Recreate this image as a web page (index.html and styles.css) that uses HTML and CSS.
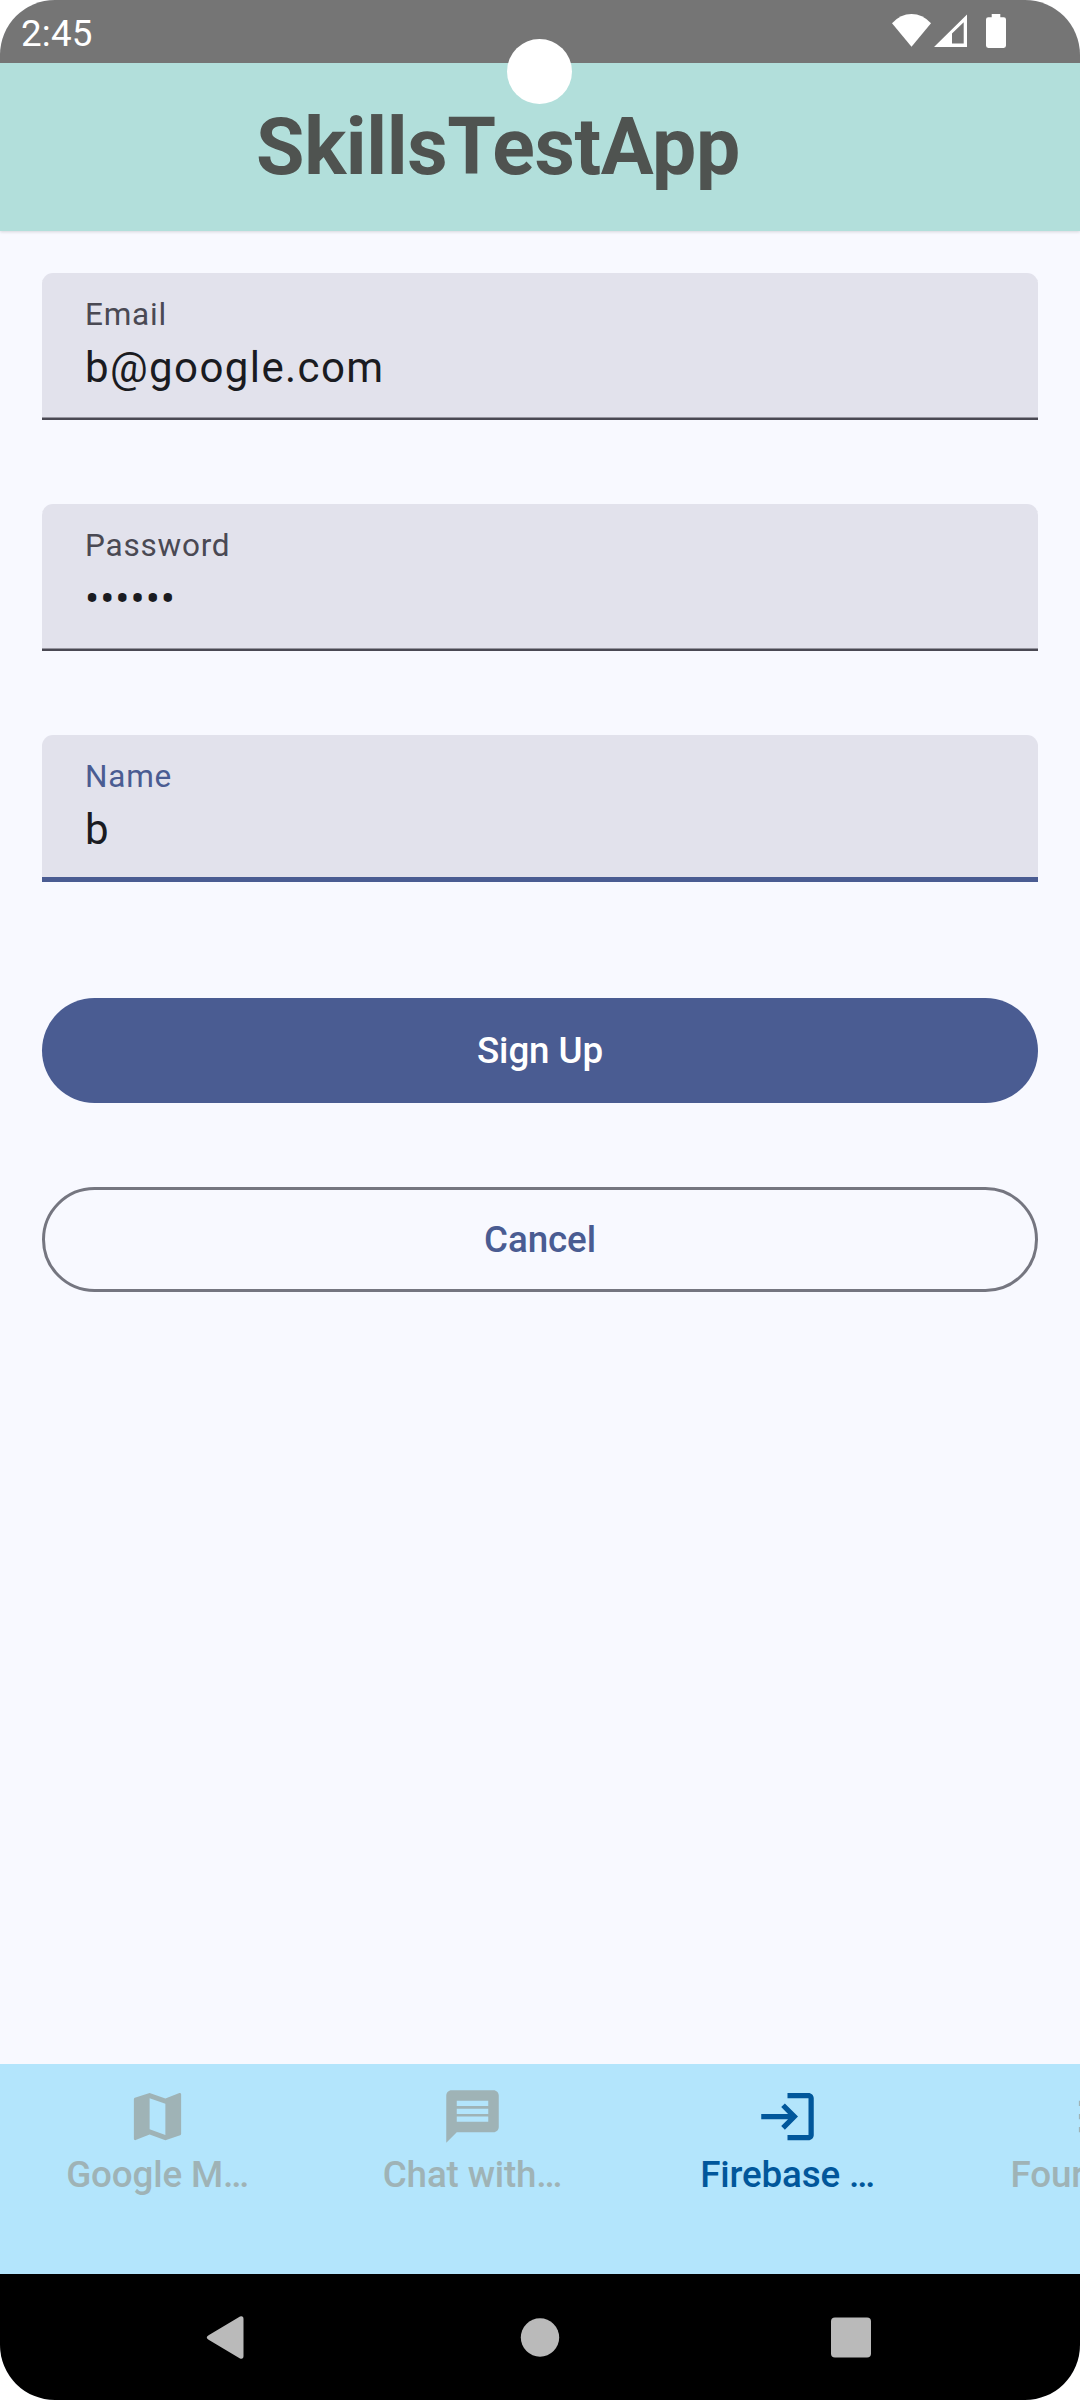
FILE: index.html
```html
<!DOCTYPE html>
<html lang="en">
<head>
<meta charset="utf-8">
<title>SkillsTestApp</title>
<link rel="stylesheet" href="styles.css">
</head>
<body>
<div class="screen">
  <div class="status-bar">
    <span class="clock">2:45</span>
    <svg class="status-icons" width="120" height="63" viewBox="0 0 120 63" aria-hidden="true">
      <path d="M0 23.2Q8.500 14 19.500 14T39 23.200L19.500 46.800Z"/>
      <path fill-rule="evenodd" d="M42 47L75 14.500V47ZM60 33.500V43.500H71.700V22.200Z"/>
      <path d="M99.700 14h8.600v3.300h3.400q2.300 0 2.300 2.300v26q0 2.300-2.300 2.300h-15.400q-2.300 0-2.300-2.300v-26q0-2.300 2.300-2.300h3.400z"/>
    </svg>
    <span class="camera"></span>
  </div>
  <header class="app-bar"><h1>SkillsTestApp</h1></header>
  <main class="form">
    <div class="field"><span class="label">Email</span><span class="value">b@google.com</span></div>
    <div class="field"><span class="label">Password</span><span class="value dots">••••••</span></div>
    <div class="field focused"><span class="label">Name</span><span class="value">b</span></div>
    <button class="btn primary">Sign Up</button>
    <button class="btn outlined">Cancel</button>
  </main>
  <nav class="tabs">
    <a class="tab">
      <svg viewBox="0 0 24 24"><path d="M20.500 3l-.16.030L15 5.100 9 3 3.360 4.900c-.21.070-.36.250-.36.480V20.500c0 .28.220.5.500.5l.16-.030L9 18.900l6 2.100 5.640-1.900c.21-.070.360-.250.360-.480V3.500c0-.280-.220-.5-.5-.5zM15 19l-6-2.110V5l6 2.110V19z"/></svg>
      <span>Google M…</span>
    </a>
    <a class="tab">
      <svg viewBox="0 0 24 24"><path d="M20 2H4c-1.100 0-1.990.9-1.990 2L2 22l4-4h14c1.100 0 2-.9 2-2V4c0-1.100-.9-2-2-2zm-2 12H6v-2h12v2zm0-3H6V9h12v2zm0-3H6V6h12v2z"/></svg>
      <span>Chat with…</span>
    </a>
    <a class="tab active">
      <svg viewBox="0 0 24 24"><path d="M12 3h8c1.100 0 2 .9 2 2v14c0 1.100-.9 2-2 2h-8v-2h8V5h-8zM11 7L9.600 8.400l2.600 2.600H2v2h10.200l-2.600 2.600L11 17l5-5z"/></svg>
      <span>Firebase …</span>
    </a>
    <a class="tab">
      <svg viewBox="0 0 24 24"><path d="M3 6h2v2H3zM3 11h2v2H3zM3 16h2v2H3zM7 6h14v2H7zM7 11h14v2H7zM7 16h14v2H7z"/></svg>
      <span>Foursqua…</span>
    </a>
  </nav>
  <div class="system-nav">
    <svg viewBox="0 0 63 63"><path d="M16 29L47 10.500Q50.500 9.500 50.500 13V50Q50.500 53.500 47 52.500L16 34Q11.500 31.500 16 29Z"/></svg>
    <svg viewBox="0 0 63 63"><circle cx="32" cy="31.500" r="19.200"/></svg>
    <svg viewBox="0 0 63 63"><rect x="8" y="11.500" width="40" height="40" rx="4"/></svg>
  </div>
</div>
</body>
</html>
```
FILE: styles.css
```css
* { box-sizing: border-box; }
body { margin: 0; background: #fff; font-family: Roboto, sans-serif; }
.screen {
  width: 1080px; height: 2400px; display: flex; flex-direction: column;
  background: #f8f9ff; border-radius: 55px; overflow: hidden;
}
.status-bar {
  position: relative; flex: none; height: 63px; display: flex; justify-content: space-between;
  padding: 0 68px 0 21px; background: #757575; color: #fff;
}
.clock { padding-top: 2px; font-size: 36.75px; line-height: 63px; letter-spacing: .2px; }
.status-icons { fill: #fff; }
.camera {
  position: absolute; left: 507px; top: 39px; width: 65px; height: 65px;
  border-radius: 50%; background: #fff;
}
.app-bar {
  flex: none; height: 168px; padding-left: 256px; background: #b2dfdb;
  box-shadow: 0 1px 3px rgba(0, 0, 0, .14);
}
.app-bar h1 {
  margin: 0; font-size: 78.75px; font-weight: 700; line-height: 168px;
  letter-spacing: -.36px; color: #4f5350;
}
.form { flex: 1; display: flex; flex-direction: column; padding: 42px 42px 0; }
.field {
  flex: none; height: 147px; margin-bottom: 84px; padding: 21px 43px 0;
  display: flex; flex-direction: column;
  background: #e2e2ec; border-radius: 11px 11px 0 0; box-shadow: inset 0 -2.600px #4a4953;
}
.label { font-size: 31.500px; line-height: 42px; letter-spacing: .78px; color: #4a4953; }
.value { font-size: 42px; line-height: 63px; letter-spacing: 1.400px; color: #1a1b21; }
.dots { letter-spacing: 1px; }
.focused { margin-bottom: 116px; box-shadow: inset 0 -5px #4a5c92; }
.focused .label { color: #4a5c92; }
.btn {
  flex: none; height: 105px; margin: 0 0 84px; padding: 0; border: 0; border-radius: 53px;
  font: 500 36.75px/105px Roboto, sans-serif; letter-spacing: -.1px;
}
.primary { background: #4a5c92; color: #fff; }
.outlined { border: 3px solid #757680; line-height: 99px; background: transparent; color: #4a5c92; }
.tabs { flex: none; height: 210px; display: flex; overflow: hidden; background: #b3e5fc; }
.tab {
  flex: none; width: 315px; padding-top: 21px; display: flex; flex-direction: column;
  align-items: center; color: #9fb3b6;
}
.tab svg { width: 63px; height: 63px; fill: currentColor; }
.tab span { font-size: 36.75px; font-weight: 500; line-height: 53px; letter-spacing: -.15px; }
.tab:last-child span { margin-right: 5px; }
.active { color: #01579b; }
.system-nav {
  flex: none; height: 126px; padding: 0 68px 0 67px; display: grid;
  grid-template-columns: repeat(3, 1fr); place-items: center; background: #000;
}
.system-nav svg { width: 63px; height: 63px; fill: #bababa; }
```
